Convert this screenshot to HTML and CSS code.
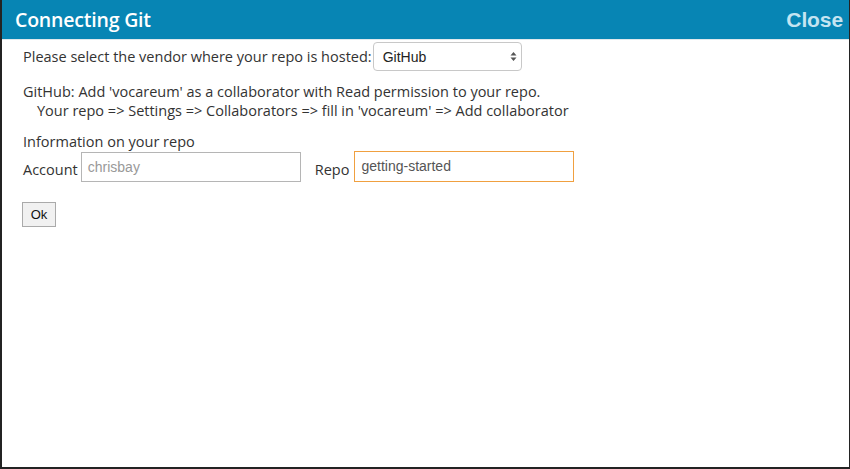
FILE: index.html
```html
<!DOCTYPE html>
<html>
<head>
<meta charset="utf-8">
<link rel="stylesheet" href="styles.css">
</head>
<body>
<div class="window">
  <div class="header">
    <div class="title">Connecting Git</div>
    <div class="close">Close</div>
  </div>
  <div class="content">
    <div class="row vendor-row">
      <span>Please select the vendor where your repo is hosted:</span>
      <div class="select"><span>GitHub</span>
        <svg class="arrows" width="7" height="11" viewBox="0 0 7 11"><path d="M3.5 1 L6.5 4.5 H0.5 Z M3.5 10 L6.5 6.5 H0.5 Z" fill="#555"/></svg>
      </div>
    </div>
    <div class="help">
      <div>GitHub: Add 'vocareum' as a collaborator with Read permission to your repo.</div>
      <div class="indent">Your repo =&gt; Settings =&gt; Collaborators =&gt; fill in 'vocareum' =&gt; Add collaborator</div>
    </div>
    <div class="info">Information on your repo</div>
    <div class="row fields">
      <span class="label">Account</span>
      <div class="input placeholder">chrisbay</div>
      <span class="label repo-label">Repo</span>
      <div class="input focused">getting-started</div>
    </div>
    <div class="btn">Ok</div>
  </div>
</div>
</body>
</html>
```
FILE: styles.css
```css
html, body {
  margin: 0;
  padding: 0;
  background: #232323;
}
.window {
  width: 847px;
  height: 467px;
  margin: 0 1px 2px 2px;
  background: #fff;
  display: flex;
  flex-direction: column;
}
.header {
  height: 39px;
  background: #0785b4;
  border-bottom: 1px solid #dfe8ec;
  display: flex;
  align-items: center;
  justify-content: space-between;
  padding: 0 6px 0 13px;
}
.title {
  font-family: "Open Sans", sans-serif;
  font-weight: 600;
  font-size: 19.5px;
  color: #fff;
  letter-spacing: -0.2px;
}
.close {
  font-family: "Liberation Sans", Arial, sans-serif;
  font-weight: 700;
  font-size: 21px;
  color: #c4e4f1;
  letter-spacing: -0.1px;
}
.content {
  padding: 2px 0 0 21px;
  font-family: "Open Sans", sans-serif;
  font-size: 14.5px;
  color: #333;
}
.row {
  display: flex;
  align-items: center;
}
.vendor-row span {
  margin-right: 1px;
}
.select {
  height: 27px;
  border: 1px solid #c8c8c8;
  border-radius: 4px;
  display: flex;
  align-items: center;
  justify-content: space-between;
  padding: 0 4px 0 9px;
  width: 134px;
  font-family: "Liberation Sans", Arial, sans-serif;
  font-size: 14px;
  color: #222;
}
.help {
  margin-top: 11px;
  line-height: 19px;
}
.indent {
  padding-left: 14px;
}
.info {
  margin-top: 12px;
  line-height: 19px;
}
.fields {
  margin-top: 0;
}
.label {
  padding-top: 6px;
}
.input {
  width: 212px;
  height: 28px;
  border: 1px solid #b5b5b5;
  margin-left: 3px;
  padding-left: 6px;
  font-family: "Liberation Sans", Arial, sans-serif;
  font-size: 14px;
  line-height: 28px;
  color: #555;
}
.placeholder {
  color: #999;
}
.repo-label {
  margin-left: 14px;
}
.focused {
  border-color: #f0a040;
  height: 29px;
  line-height: 29px;
  margin-left: 5px;
}
.btn {
  margin-top: 20px;
  margin-left: -1px;
  width: 32px;
  height: 23px;
  border: 1px solid #aaa;
  background: #f1f1f1;
  font-family: "Liberation Sans", Arial, sans-serif;
  font-size: 13px;
  color: #111;
  display: flex;
  align-items: center;
  justify-content: center;
}
```
